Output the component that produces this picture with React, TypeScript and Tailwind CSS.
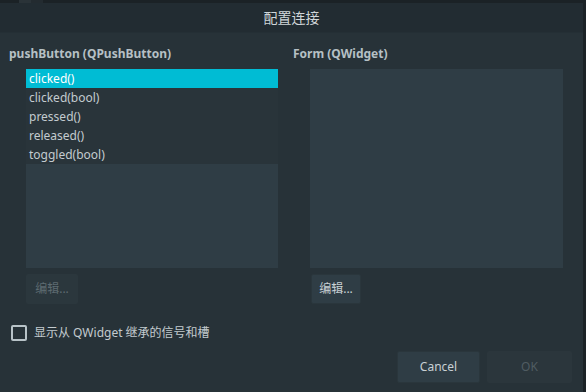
import React from "react";

const signals = ["clicked()", "clicked(bool)", "pressed()", "released()", "toggled(bool)"];

function ListBox({ items, selected }: { items: string[]; selected?: number }) {
  return (
    <div className="ml-[17px] w-[252px] h-[199px] bg-[#2f3d45] flex flex-col">
      {items.map((s, i) => (
        <div
          key={s}
          className={`h-[19px] pl-[3px] leading-[19px] text-[12px] ${
            i === selected ? "bg-[#00bcd4] text-white" : "bg-[#29343a] text-[#c3cbcf]"
          }`}
        >
          {s}
        </div>
      ))}
    </div>
  );
}

export default function App() {
  return (
    <div
      className="w-[586px] h-[392px] bg-[#273238] flex flex-col border-r-[3px] border-[#1b2226] overflow-hidden"
      style={{ fontFamily: '"Noto Sans", "Noto Sans CJK SC", sans-serif' }}
    >
      <div className="h-[3px] bg-[#1b2226] flex shrink-0">
        <div className="w-[19px]" />
        <div className="w-[12px] bg-[#2a3338]" />
        <div className="w-[12px] bg-[#232b30]" />
      </div>
      <div className="h-[30px] shrink-0 bg-[#222c32] flex items-center justify-center text-[14px] text-[#d0d6d9] border-b border-[#242f35]">
        配置连接
      </div>

      <div className="grid grid-cols-[284px_1fr] pl-[9px] pt-[11px]">
        <div className="flex flex-col">
          <div className="h-[20px] leading-[20px] text-[12px] font-bold text-[#b6c0c5]">pushButton (QPushButton)</div>
          <div className="mt-[5px]">
            <ListBox items={signals} selected={0} />
          </div>
          <div className="mt-[6px] ml-[17px]">
            <button className="w-[52px] h-[30px] bg-[#2b373d] text-[12px] text-[#5e6b71] rounded-[2px]">编辑...</button>
          </div>
        </div>
        <div className="flex flex-col">
          <div className="h-[20px] leading-[20px] text-[12px] font-bold text-[#b6c0c5]">Form (QWidget)</div>
          <div className="mt-[5px]">
            <div className="ml-[17px] w-[253px] h-[199px] bg-[#2f3d45]" />
          </div>
          <div className="mt-[6px] ml-[18px]">
            <button className="w-[50px] h-[30px] bg-[#2f3d45] text-[12px] text-[#c8d0d4] rounded-[2px] border border-[#2a363c]">
              编辑...
            </button>
          </div>
        </div>
      </div>

      <div className="mt-[21px] ml-[11px] flex items-center gap-[7px]">
        <div className="w-[16px] h-[16px] border-2 border-[#b8c3c8] rounded-[2px]" />
        <span className="text-[12px] text-[#c3cbcf] leading-[16px]">显示从 QWidget 继承的信号和槽</span>
      </div>

      <div className="mt-[10px] flex justify-end gap-[7px] pr-[11px]">
        <button className="w-[83px] h-[32px] bg-[#2f3d45] text-[12px] text-[#c8d0d4] rounded-[2px] border border-[#2a363c]">
          Cancel
        </button>
        <button className="w-[85px] h-[32px] bg-[#2b363c] text-[12px] text-[#505c62] rounded-[2px]">OK</button>
      </div>
    </div>
  );
}
